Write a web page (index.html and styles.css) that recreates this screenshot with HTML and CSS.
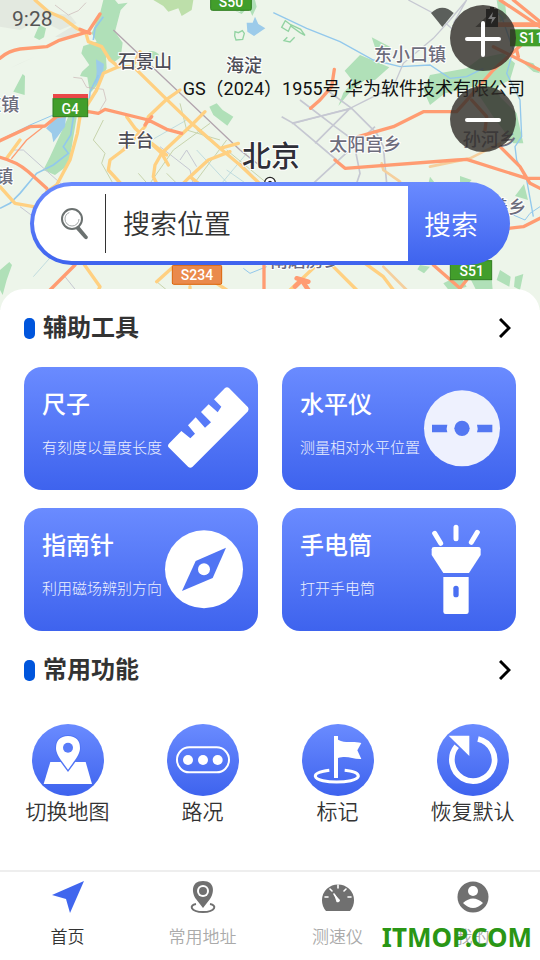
FILE: index.html
```html
<!DOCTYPE html>
<html lang="zh-CN">
<head>
<meta charset="utf-8">
<meta name="viewport" content="width=device-width, initial-scale=1">
<title>地图工具</title>
<link rel="stylesheet" href="styles.css">
</head>
<body>
<svg class="defs" aria-hidden="true">
  <defs>
    <linearGradient id="blue" x1="0" y1="0" x2="0" y2="1"><stop offset="0" stop-color="#6a8bff"/><stop offset="1" stop-color="#3e63ee"/></linearGradient>
  </defs>
</svg>
<header class="hero">
  <svg class="map" viewBox="0 0 1620 930" preserveAspectRatio="xMidYMin slice">
    <rect width="1620" height="930" fill="#edf5ea"/>
    <g fill="#e3e9e0">
      <path d="M0 0H110L160 40 210 45 230 70 180 90 120 60 60 90 0 80z"/>
      <path d="M165 110L215 80 240 92 200 115zM30 205L105 170 60 190z"/>
    </g>
    <g fill="#b0e0b8">
      <path d="M310 0H345L355 12 383 8 362 30 345 95 368 128 362 172 338 190 318 170 320 205 305 240 270 280 262 232 240 228 246 215 268 195 244 160 250 138 290 125 275 100 300 40z"/>
      <path d="M118 75L138 85 132 112 118 120 102 112zM68 222L75 228 74 285 40 275z"/>
      <path d="M650 310L668 330 700 350 682 377 640 345 628 320z"/>
      <path d="M440 158Q460 145 478 165L450 185z"/>
      <path d="M205 350L230 352 212 460 205 495 165 525 130 510 150 470z"/>
      <path d="M0 810L28 786 36 795 20 840 8 885 0 870z"/>
      <path d="M705 32L720 36 735 0 765 0 770 20 757 48 745 20 725 42z"/>
      <path d="M1080 165L1168 202 1125 240 1095 240 1055 270 1015 318 1030 278 1060 245 1034 212z"/>
      <path d="M1115 112L1170 140 1150 158 1125 142z"/>
      <path d="M1290 225L1400 205 1440 175 1510 160 1545 190 1530 240 1490 260 1500 290 1550 340 1570 430 1540 430 1480 350 1420 260 1335 280 1290 315 1270 270z"/>
      <path d="M1490 0L1515 5 1520 55 1500 65zM1560 180L1600 190 1620 220 1600 215z"/>
      <path d="M1290 530L1302 545 1300 560 1285 552zM1380 528L1415 540 1400 556 1380 545zM1572 552L1584 600 1545 588z"/>
      <path d="M1260 795L1290 800 1272 820 1252 808zM1330 850L1380 825 1400 860 1350 875zM1412 838L1475 833 1478 870 1430 874zM1500 810L1532 830 1528 860 1490 840zM1545 830L1570 822 1560 870 1542 860z"/>
    </g>
    <g fill="none" stroke="#92d3a2" stroke-width="4">
      <path d="M705 95L715 98 727 92 733 100 728 118 708 120 704 108z"/>
      <path d="M856 62L845 82 865 94 872 78 900 98 915 106 902 88 872 74zM862 112L852 122 870 126 884 112"/>
    </g>
    <g fill="#bddfaa"><path d="M460 0H580L575 30 545 48 535 25 505 35 490 18z"/></g>
    <g fill="#9ccbea">
      <path d="M765 50L775 72 796 85 762 108 742 95 740 68 758 68z"/>
      <path d="M165 355L198 350 195 380 160 427 155 400 138 385z"/>
      <path d="M288 178L312 192 308 225 285 260 290 215z"/>
    </g>
    <g fill="none" stroke="#92c8ec" stroke-width="5">
      <path d="M310 50L285 85 280 120M295 225L270 275 268 300M222 340L212 405 190 440 205 460 160 495 110 520 60 580 30 610 0 625"/>
      <path d="M820 38L920 85 1020 125 1120 180 1200 200 1290 195 1350 235 1400 230 1450 205M1480 30L1505 50 1540 150 1520 220 1560 300 1565 410 1545 440 1550 480 1580 540 1600 650" stroke-width="4"/>
      <path d="M0 420L90 375 160 345M730 805L750 820 800 800M1540 645L1575 660 1590 640 1620 620" stroke-width="3"/>
      <path d="M100 830L215 700M455 420L560 360M640 580L740 460M590 450L720 590M680 510L780 580" stroke="#a9cfd8" stroke-width="2"/>
    </g>
    <g fill="none" stroke="#c6c8d2" stroke-width="4">
      <path d="M340 90L720 450 790 505M720 490L830 600" stroke="#b2a5ae"/>
      <path d="M1225 0L1310 45 1360 90M1400 0L1350 60 1300 115 1210 190 1180 260 1050 325 880 370M1400 0L1360 70"/>
      <path d="M900 300L1005 380 1060 420 1080 520 1070 550M845 350L880 370 1010 480M980 270L1055 325 1130 400 1150 440 1160 550M1055 325L875 370M1125 380L940 550M1050 325L945 430" stroke-width="5"/>
      <path d="M165 15L205 45 235 32 258 8M220 232L245 235 260 262 310 268 318 300 300 330" stroke="#c9b4b4" stroke-width="2"/>
      <path d="M40 450H70L215 580M60 620L100 650M195 830L235 880M480 440L570 510 580 555M540 480L560 450 590 500" stroke-width="3"/>
    </g>
    <g fill="none" stroke="#c8d4ad" stroke-width="3">
      <path d="M310 360L280 420 315 460 305 490 350 570 440 550M540 310L560 390 660 420M590 390L700 480M450 550L520 450 630 370M415 520L450 560"/>
      <path d="M500 520L560 580M590 540L680 420M680 450L850 590M520 800L470 845 500 870"/>
    </g>
    <g fill="none" stroke="#ffd081" stroke-width="10" stroke-linejoin="round" stroke-linecap="round">
      <path d="M105 0L145 35 190 55 230 85 258 100 265 125 305 140 330 180 355 200 310 220 290 270 265 310 240 350 232 400 210 480 170 555 140 575"/>
      <path d="M355 200H400L500 298 575 370 660 445 720 495 820 590M400 195L420 155M660 445L715 430"/>
      <path d="M540 270L500 298 445 350 435 380 370 450 330 480 325 510 380 570M615 335L575 375 485 460 465 495 460 530 480 570"/>
      <path d="M380 350L405 385 485 460 505 495M690 455L625 480 570 530 540 560M570 530L620 570M455 430L500 465"/>
      <path d="M0 560L45 610 100 620M250 790L300 860 290 880M20 475L60 420M470 845L520 800M570 860V890M650 850L680 870M950 795L870 870M1000 800L1070 870M1095 790L1150 830 1180 870"/>
      <path d="M1150 800L1220 870M1200 545L1150 510 1145 490M1290 500L1410 475 1500 430" stroke="#f5cf9d" stroke-width="8"/>
    </g>
    <g fill="none" stroke="#ff9c72" stroke-width="10" stroke-linejoin="round" stroke-linecap="round">
      <path d="M0 175Q25 152 60 147L140 140 175 122 215 110 265 95 300 42M240 88L270 100"/>
      <path d="M0 422L90 380 135 378 170 350 265 335 295 340 315 328 445 360 500 388 545 400M445 360L435 375 455 350"/>
      <path d="M0 472Q50 485 85 515L140 565M225 795L150 870M792 790V870"/>
      <path d="M35 475L80 420 175 345" stroke-width="4"/>
      <path d="M1003 208L995 260 960 300 932 325M1075 410L1180 380 1270 335 1370 335 1410 290 1480 210 1580 120M1500 0L1620 80M1540 0L1620 65M1480 140L1620 210M1550 150L1555 170"/>
      <path d="M1415 300L1460 350 1455 390M1005 480L1035 505 1370 480 1400 478 1500 510 1580 535H1620M1500 440L1560 500 1590 550 1620 565M1525 685L1570 680 1620 655M1300 795L1380 865 1400 840"/>
      <path d="M885 860L905 840 925 870M890 835L925 845M1450 74H1620" stroke-width="14"/>
    </g>
    <g class="road-sign">
      <rect x="632" y="-20" width="122" height="51" rx="5" fill="#429e2b" stroke="#2e7d20" stroke-width="3"/><text x="693" y="20">S50</text>
      <rect x="159" y="296" width="104" height="54" fill="#429e2b" stroke="#2e7d20" stroke-width="3"/><path d="M159 282H264V294H159z" fill="#ea4748"/><text x="211" y="341">G4</text>
      <rect x="1530" y="88" width="120" height="51" fill="#429e2b"/><text x="1594" y="129">S11</text>
      <rect x="517" y="796" width="148" height="57" rx="4" fill="#ea8a4c" stroke="#dc6408" stroke-width="3"/><text x="591" y="839">S234</text>
      <rect x="1351" y="782" width="124" height="57" fill="#429e2b" stroke="#2e7d20" stroke-width="3"/><text x="1415" y="829">S51</text>
    </g>
    <g class="place">
      <text x="354" y="203">石景山</text><text x="678" y="215">海淀</text><text x="353" y="442">丰台</text>
      <g class="minor"><text x="-50" y="332">庄镇</text><text x="-14" y="549">镇</text><text x="1122" y="182">东小口镇</text><text x="988" y="454">太阳宫乡</text><text class="shaded" x="1388" y="439">孙河乡</text><text x="1471" y="643">善乡</text><text x="810" y="800">南磨房乡</text></g>
      <text class="capital" x="726" y="500">北京</text>
    </g>
    <circle cx="810" cy="548" r="16" fill="#fff" stroke="#222" stroke-width="4"/><circle cx="810" cy="548" r="6" fill="#222"/>
    <g fill="#5b5f5b"><path d="M1293 39Q1327 7 1361 39L1327 81z"/><path d="M1426 81L1486 25V81z"/></g>
  </svg>
  <time class="clock">9:28</time>
  <p class="credit">GS（2024）1955号 华为软件技术有限公司</p>
  <div class="zoom">
    <button type="button" aria-label="放大"><svg viewBox="0 0 66 66"><path class="battery" d="M38 4H40V2H44V4H48V22H36V4z"/><path class="bolt" d="M43 7L38 14H42L41 19 46 12H42z"/><path d="M17 34H49M33 18V50"/></svg></button>
    <button type="button" aria-label="缩小"><svg viewBox="0 0 66 66"><path d="M17 34H49"/></svg></button>
  </div>
  <form class="search">
    <label class="field">
      <svg viewBox="0 0 30 34"><circle cx="12" cy="12" r="10" fill="none" stroke="#6b7170" stroke-width="2"/><circle cx="12" cy="12" r="7" fill="none" stroke="#a3a8a8" stroke-dasharray="30 14"/><path d="M16 22L19 19 28 30Q27 34 24 31z" fill="#6b7170"/></svg>
      <input type="text" placeholder="搜索位置" aria-label="搜索位置">
    </label>
    <button type="button">搜索</button>
  </form>
</header>
<main class="sheet">
  <section>
    <div class="head"><h2>辅助工具</h2><a href="#tools" aria-label="更多辅助工具"><svg viewBox="0 0 12 20"><path d="M1 1L10 10 1 19"/></svg></a></div>
    <div class="cards" id="tools">
      <a class="card" href="#ruler"><span class="copy"><strong>尺子</strong><small>有刻度以量度长度</small></span>
        <svg viewBox="486 201 288 369"><path d="M504 438Q504 434 508 430L544 393 571 415 585 401 564 376 587 352 615 383 633 367 603 336 626 313 653 337 664 320 642 298 675 264Q681 259 687 264L744 322Q748 328 744 334L577 501Q571 506 565 501L508 444Q504 441 504 438z" fill="#fff"/></svg></a>
      <a class="card" href="#level"><span class="copy"><strong>水平仪</strong><small>测量相对水平位置</small></span>
        <svg viewBox="450 201 288 369"><circle cx="576" cy="385" r="114" fill="#eef1fe"/><circle cx="576" cy="385" r="23" fill="#5377f2"/><path d="M486 374H532Q528 385 532 397H486zM621 374H667V397H621Q625 385 621 374z" fill="#5377f2"/></svg></a>
      <a class="card" href="#compass"><span class="copy"><strong>指南针</strong><small>利用磁场辨别方向</small></span>
        <svg viewBox="486 24 288 369"><circle cx="612" cy="208" r="117" fill="#fff"/><path d="M678 143L638 234 546 273 587 183z" fill="#5074f3"/><circle cx="612" cy="208" r="18" fill="#fff"/></svg></a>
      <a class="card" href="#torch"><span class="copy"><strong>手电筒</strong><small>打开手电筒</small></span>
        <svg viewBox="450 24 288 369"><path d="M494 100L512 130M558 82V116M622 97L604 127" stroke="#fff" stroke-width="15" stroke-linecap="round"/><path d="M492 141H625Q632 141 632 148V165L597 219H520L485 165V148Q485 141 492 141z" fill="#fff"/><path d="M520 231H596V335Q596 342 589 342H527Q520 342 520 335z" fill="#fff"/><rect x="550" y="257" width="16" height="35" rx="8" fill="#4a6ff2"/></svg></a>
    </div>
  </section>
  <section>
    <div class="head"><h2>常用功能</h2><a href="#common" aria-label="更多常用功能"><svg viewBox="0 0 12 20"><path d="M1 1L10 10 1 19"/></svg></a></div>
    <div class="actions" id="common">
      <button type="button"><svg viewBox="93 72 216 216"><circle cx="201" cy="180" r="108" fill="url(#blue)"/><path d="M148 186H254L273 252H128z" fill="#fff"/><path d="M201 105Q240 107 240 145C240 166 222 188 201 216 180 188 162 166 162 145Q162 107 201 105z" fill="#5175f5"/><path d="M201 108Q237 110 237 144C237 164 220 182 201 209 182 182 165 164 165 144Q165 110 201 108z" fill="#fff"/><circle cx="201" cy="143" r="15" fill="#587bf8"/></svg>切换地图</button>
      <button type="button"><svg viewBox="498 72 216 216"><circle cx="606" cy="180" r="108" fill="url(#blue)"/><rect x="528" y="142" width="156" height="75" rx="37" fill="none" stroke="#fff" stroke-width="6"/><g fill="#fff"><circle cx="561" cy="180" r="15"/><circle cx="606" cy="180" r="15"/><circle cx="650" cy="180" r="15"/></g></svg>路况</button>
      <button type="button"><svg viewBox="93 72 216 216"><circle cx="201" cy="180" r="108" fill="url(#blue)"/><path d="M189 108H201V119C225 132 242 122 271 129L259 151 271 177C243 178 230 165 201 174V234H189z" fill="#fff"/><path d="M175 211C145 215 132 221 133 229 136 241 170 246 197 246S260 241 262 229C262 219 244 213 221 211" fill="none" stroke="#fff" stroke-width="9"/></svg>标记</button>
      <button type="button"><svg viewBox="498 72 216 216"><circle cx="606" cy="180" r="108" fill="url(#blue)"/><path d="M621 117A64 64 0 1 1 557 139" fill="none" stroke="#fff" stroke-width="17"/><path d="M533 107H595V168z" fill="#fff"/></svg>恢复默认</button>
    </div>
  </section>
</main>
<nav class="tabs">
  <a class="active" href="#home"><svg viewBox="0 0 34 34"><path d="M33 1L19 33 15 19 1 15z" fill="#4066ee"/></svg>首页</a>
  <a href="#places"><svg viewBox="0 0 34 34"><path d="M10 24C3 25 4 32 17 32S31 25 24 24" fill="none" stroke="#707070" stroke-width="2"/><path d="M17 1C30 1 28 14 24 19L17 28 10 19C6 14 4 1 17 1z" fill="#707070"/><circle cx="17" cy="11" r="6" fill="#fff"/><circle cx="17" cy="11" r="4" fill="#707070"/></svg>常用地址</a>
  <a href="#speed"><svg viewBox="0 0 34 34"><path d="M5 31A16 16 0 1 1 29 31z" fill="#707070"/><g stroke="#fff" stroke-width="1.6"><path d="M17 5V8M9 9L11 11M25 9L23 11M4 17H7M27 17H30M13 14L17 20" stroke-linecap="round"/></g><path d="M13 14L19 20A2.4 2.4 0 0 1 15.500 22z" fill="#fff"/></svg>测速仪</a>
  <a href="#me"><svg viewBox="0 0 34 34"><circle cx="17" cy="17" r="15.500" fill="#707070"/><circle cx="17" cy="11" r="5" fill="#fff"/><path d="M7 23Q17 14 27 23 17 33 7 23z" fill="#fff"/></svg>我的</a>
  <span class="mark">ITMOP.COM</span>
</nav>
</body>
</html>
```
FILE: styles.css
```css
* { box-sizing: border-box; }
body {
  margin: 0;
  min-height: 100vh;
  display: flex;
  flex-direction: column;
  background: #fff;
  color: #333;
  font-family: Roboto, "Noto Sans CJK SC", sans-serif;
}
a { color: inherit; text-decoration: none; }
button { border: 0; padding: 0; background: none; font: inherit; color: inherit; }
svg { display: block; }
.defs { position: absolute; width: 0; height: 0; }

.hero { position: relative; padding: 182px 30px 24px; }
.map { position: absolute; top: 0; left: 0; width: 100%; height: 310px; }
.road-sign text { fill: #fff; font: 500 42px Roboto, sans-serif; text-anchor: middle; }
.place text {
  fill: #4d4d57;
  font-size: 54px;
  font-weight: 500;
  stroke: #fff;
  stroke-width: 6px;
  paint-order: stroke;
}
.place .minor text { fill: #6d6d7c; }
.place .minor .shaded { stroke: none; }
.place .capital { font-size: 87px; fill: #2f2f38; }
.clock { position: absolute; top: 6px; left: 12px; font-size: 21px; line-height: 26px; color: #555; }
.credit { position: absolute; top: 77px; right: 15px; margin: 0; font-size: 18px; line-height: 24px; color: #111; white-space: nowrap; }
.zoom { position: absolute; top: 5px; right: 24px; display: grid; gap: 15px; }
.zoom button { width: 66px; height: 66px; border-radius: 50%; background: rgba(48, 44, 40, 0.8); }
.zoom path { fill: none; stroke: #fff; stroke-width: 4; stroke-linecap: round; }
.zoom .battery { fill: #252422; stroke: none; }
.zoom .bolt { fill: #777; stroke: none; }

.search {
  position: relative;
  display: flex;
  height: 83px;
  padding: 4px 0 4px 4px;
  border-radius: 42px;
  background: linear-gradient(#6a8bff, #3e63ee);
}
.field { flex: 1; min-width: 0; display: flex; align-items: center; padding-left: 26px; border-radius: 38px 0 0 38px; background: #fff; }
.field svg { width: 30px; height: 34px; flex: none; }
.field input {
  flex: 1;
  min-width: 0;
  height: 59px;
  margin-left: 15px;
  padding: 2px 0 0 17px;
  border: 0;
  border-left: 1px solid #333;
  background: none;
  font: 350 27px/40px Roboto, "Noto Sans CJK SC", sans-serif;
  color: #333;
}
.field input::placeholder { color: #333; opacity: 1; }
.search button { width: 102px; padding-right: 16px; font-size: 27px; font-weight: 350; color: #fff; }

.sheet { position: relative; flex: 1; padding: 20px 0 24px; border-radius: 24px 24px 0 0; background: #fff; }
.head { display: flex; align-items: center; justify-content: space-between; height: 38px; padding: 0 29px 0 24px; }
.head h2 { display: flex; align-items: center; gap: 8px; margin: 0; font-size: 24px; line-height: 38px; font-weight: 700; }
.head h2::before { content: ""; width: 11px; height: 21px; border-radius: 5px; background: #0055dc; }
.head svg { width: 12px; height: 20px; }
.head path { fill: none; stroke: #000; stroke-width: 3; }
.cards { display: grid; grid-template-columns: 1fr 1fr; gap: 18px 24px; padding: 20px 24px; }
.card { display: flex; justify-content: space-between; height: 123px; padding-left: 18px; border-radius: 18px; background: linear-gradient(#6a8bff, #3e63ee); color: #fff; }
.card svg { width: 96px; height: 123px; flex: none; }
.copy { display: flex; flex-direction: column; gap: 13px; padding-top: 20px; white-space: nowrap; }
.copy strong { font-size: 24px; line-height: 36px; font-weight: 500; }
.copy small { font-size: 15px; line-height: 24px; font-weight: 300; opacity: 0.9; }
.actions { display: grid; grid-template-columns: repeat(4, 1fr); padding-top: 35px; }
.actions button { display: flex; flex-direction: column; align-items: center; font-size: 21px; line-height: 33px; font-weight: 350; }
.actions svg { width: 72px; height: 72px; }

.tabs { position: relative; display: grid; grid-template-columns: repeat(4, 1fr); height: 90px; padding-top: 8px; border-top: 2px solid #eee; background: #fff; }
.tabs a { display: flex; flex-direction: column; align-items: center; gap: 11px; font-size: 17px; line-height: 24px; font-weight: 350; color: #aaa; }
.tabs .active { color: #333; }
.tabs svg { width: 34px; height: 34px; }
.mark { position: absolute; right: 8px; top: 47px; font: 700 26px/36px "Noto Sans", sans-serif; color: #2a9615; }
```
